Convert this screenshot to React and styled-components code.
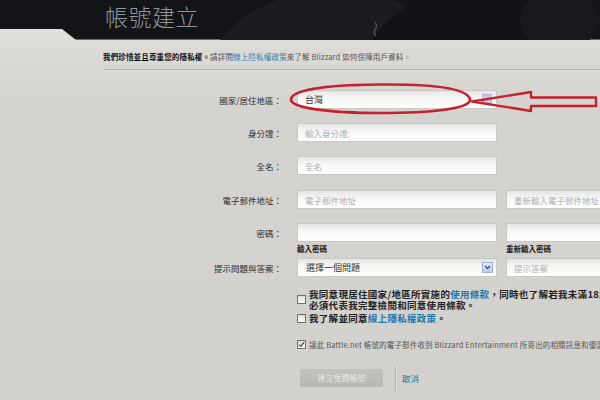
import React from "react";
import styled, { createGlobalStyle, css } from "styled-components";

const GlobalStyle = createGlobalStyle`
  html, body { margin: 0; padding: 0; }
  body {
    background: #d4d2ce;
    font-family: "Noto Sans CJK TC", "Noto Sans", "Liberation Sans", sans-serif;
  }
`;

const Page = styled.div`
  position: relative;
  width: 600px;
  height: 400px;
  overflow: hidden;
  background: linear-gradient(#e2e1de 0px, #dbdad7 50px, #d5d3cf 110px, #d3d1cd 100%);
`;

const Header = styled.header`
  position: relative;
  height: 40px;
  background: #131417;
  overflow: hidden;
  &::after {
    content: "";
    position: absolute;
    left: 0;
    bottom: 0;
    width: 76px;
    height: 11px;
    background: #e0dfdc;
    clip-path: polygon(0 0, 62px 0, 76px 100%, 0 100%);
  }
  &::before {
    content: "";
    position: absolute;
    left: 0;
    right: 0;
    bottom: 0;
    height: 1px;
    background: #6c6c6c;
  }
`;

const HeaderArt = styled.svg`
  position: absolute;
  left: 0;
  top: 0;
`;

const Title = styled.h1`
  position: relative;
  margin: 0;
  padding: 3px 0 0 105px;
  font-size: 23px;
  line-height: 26px;
  font-weight: 300;
  color: #8d979d;
  letter-spacing: 0.5px;
`;

const Content = styled.main`
  padding-left: 103px;
`;

const PrivacyNote = styled.p`
  margin: 0;
  padding-top: 12px;
  font-size: 7.5px;
  line-height: 10px;
  color: #555;
  white-space: nowrap;
  letter-spacing: 0.15px;
  b { color: #111; font-weight: 700; }
  a { color: #2f7fb4; text-decoration: none; }
`;

const Divider = styled.div`
  margin-top: 7px;
  height: 1px;
  background: #b2b0ac;
  border-bottom: 1px solid #e4e3e0;
`;

const Row = styled.div`
  display: flex;
  align-items: center;
  margin-top: ${(p) => p.$gap}px;
`;

const Label = styled.label`
  flex: none;
  width: 194px;
  box-sizing: border-box;
  padding-right: 15px;
  text-align: right;
  font-size: 8.5px;
  color: #2e2e2e;
  white-space: nowrap;
`;

const fieldBase = css`
  position: relative;
  flex: none;
  box-sizing: border-box;
  width: 200px;
  height: 19px;
  border: 1px solid #c9c8c5;
  background: linear-gradient(#e4e4e4 0px, #f7f7f7 7px, #ffffff 100%);
  display: flex;
  align-items: center;
  padding-left: 7px;
  font-size: 8.5px;
  white-space: nowrap;
  overflow: hidden;
`;

const Field = styled.div`
  ${fieldBase}
  color: ${(p) => (p.$filled ? "#3a3a3a" : "#b0b0b0")};
  font-size: ${(p) => (p.$filled ? 9 : 8.5)}px;
  margin-left: ${(p) => (p.$second ? 9 : 0)}px;
`;

const Select = styled.div`
  ${fieldBase}
  color: #333;
  font-size: 9px;
  padding-left: 8px;
`;

const DropButton = styled.span`
  position: absolute;
  right: 3px;
  top: 3px;
  width: 11px;
  height: 11px;
  box-sizing: border-box;
  border: 1px solid #9fb1d3;
  background: linear-gradient(#e3ebf8, #bccdeb);
  display: flex;
  align-items: center;
  justify-content: center;
`;

const CountryMark = styled.span`
  position: absolute;
  right: 4px;
  top: 3px;
  width: 8px;
  height: 8px;
  background: #c6c7e7;
  border: 1px solid #b4b5d8;
`;

const Captions = styled.div`
  display: flex;
  margin-top: 2px;
  padding-left: 194px;
  font-size: 7.5px;
  line-height: 10px;
  font-weight: 700;
  color: #1c1c1c;
`;

const Caption = styled.span`
  flex: none;
  width: ${(p) => p.$w}px;
  margin-left: ${(p) => p.$offset || 0}px;
  white-space: nowrap;
`;

const Agreements = styled.div`
  padding-left: 194px;
  display: flex;
  flex-direction: column;
`;

const CheckItem = styled.div`
  display: flex;
  align-items: center;
  margin-top: ${(p) => p.$gap}px;
`;

const Box = styled.span`
  flex: none;
  width: 9px;
  height: 9px;
  box-sizing: border-box;
  border: 1px solid #6f6f6f;
  background: linear-gradient(#dcdcdc, #ffffff);
  display: flex;
  align-items: center;
  justify-content: center;
`;

const CheckText = styled.div`
  margin-left: 3px;
  font-size: ${(p) => (p.$small ? 7.5 : 9.5)}px;
  line-height: ${(p) => (p.$small ? 10 : 10.5)}px;
  font-weight: ${(p) => (p.$small ? 400 : 700)};
  letter-spacing: ${(p) => (p.$small ? 0.15 : 0.3)}px;
  color: ${(p) => (p.$small ? "#555" : "#222")};
  white-space: nowrap;
  a { color: #1f78ad; text-decoration: none; }
`;

const Actions = styled.div`
  display: flex;
  align-items: center;
  margin-top: 16px;
  padding-left: 197px;
`;

const SubmitButton = styled.button`
  width: 83px;
  height: 18px;
  border: none;
  border-radius: 1px;
  background: linear-gradient(#c2c1be, #b9b8b5);
  color: #e9e9e7;
  font-family: inherit;
  font-size: 8px;
  padding: 0;
`;

const VSep = styled.span`
  width: 1px;
  height: 24px;
  margin-left: 12px;
  background: #b5b3af;
  border-right: 1px solid #e2e1de;
`;

const CancelLink = styled.a`
  margin-left: 5px;
  font-size: 8.5px;
  color: #2a6d9c;
  text-decoration: none;
`;

const Annotation = styled.svg`
  position: absolute;
  left: 0;
  top: 0;
  pointer-events: none;
`;

export default function App() {
  return (
    <>
      <GlobalStyle />
      <Page>
        <Header>
          <HeaderArt width="600" height="40" viewBox="0 0 600 40">
            <ellipse cx="335" cy="95" rx="135" ry="105" fill="#1b1c20" />
            <ellipse cx="480" cy="80" rx="120" ry="92" fill="#111215" />
            <ellipse cx="560" cy="20" rx="40" ry="30" fill="#17181b" />
            <path d="M375 22 q3 4 0 8 q-2 3 1 6" stroke="#55585c" strokeWidth="1.2" fill="none" />
          </HeaderArt>
          <Title>帳號建立</Title>
        </Header>
        <Content>
          <PrivacyNote>
            <b>我們珍惜並且尊重您的隱私權。</b>請詳閱<a href="#">線上隱私權政策</a>來了解 Blizzard 如何保障用戶資料。
          </PrivacyNote>
          <Divider />
          <Row $gap={19}>
            <Label>國家/居住地區：</Label>
            <Field $filled>
              台灣
              <CountryMark />
            </Field>
          </Row>
          <Row $gap={14}>
            <Label>身分證：</Label>
            <Field>輸入身分證:</Field>
          </Row>
          <Row $gap={14}>
            <Label>全名：</Label>
            <Field>全名</Field>
          </Row>
          <Row $gap={15}>
            <Label>電子郵件地址：</Label>
            <Field>電子郵件地址</Field>
            <Field $second>重新輸入電子郵件地址</Field>
          </Row>
          <Row $gap={14}>
            <Label>密碼：</Label>
            <Field />
            <Field $second />
          </Row>
          <Captions>
            <Caption $w={200}>輸入密碼</Caption>
            <Caption $w={200} $offset={9}>重新輸入密碼</Caption>
          </Captions>
          <Row $gap={4}>
            <Label>提示問題與答案：</Label>
            <Select>
              選擇一個問題
              <DropButton>
                <svg width="7" height="5" viewBox="0 0 7 5">
                  <path d="M1 1 L3.5 3.5 L6 1" stroke="#2c4f8a" strokeWidth="1.3" fill="none" />
                </svg>
              </DropButton>
            </Select>
            <Field $second>提示答案</Field>
          </Row>
          <Agreements>
            <CheckItem $gap={12}>
              <Box />
              <CheckText>
                我同意現居住國家/地區所實施的<a href="#">使用條款</a>，同時也了解若我未滿18歲，則
                <br />
                必須代表我完整檢閱和同意使用條款。
              </CheckText>
            </CheckItem>
            <CheckItem $gap={3}>
              <Box />
              <CheckText>
                我了解並同意<a href="#">線上隱私權政策</a>。
              </CheckText>
            </CheckItem>
            <CheckItem $gap={16}>
              <Box>
                <svg width="7" height="7" viewBox="0 0 7 7">
                  <path d="M1 3.6 L2.8 5.4 L6 1.4" stroke="#2f5a35" strokeWidth="1.3" fill="none" />
                </svg>
              </Box>
              <CheckText $small>
                讓此 Battle.net 帳號的電子郵件收到 Blizzard Entertainment 所寄出的相關訊息和優惠。
              </CheckText>
            </CheckItem>
          </Agreements>
          <Actions>
            <SubmitButton>建立免費帳號</SubmitButton>
            <VSep />
            <CancelLink href="#">取消</CancelLink>
          </Actions>
        </Content>
        <Annotation width="600" height="400" viewBox="0 0 600 400">
          <path
            d="M470 99 C 466 86, 420 84, 378 84.5 C 330 85, 293 89, 291 99 C 289 108, 330 113, 380 113 C 430 113, 472 109, 470 99 Z"
            stroke="#c5202b"
            strokeWidth="2.6"
            fill="none"
          />
          <path
            d="M472 101.5 L531 92 L531 97.5 L596 97.5 L596 106 L531 106 L531 111 Z"
            stroke="#c5202b"
            strokeWidth="2.4"
            strokeLinejoin="round"
            fill="none"
          />
        </Annotation>
      </Page>
    </>
  );
}
